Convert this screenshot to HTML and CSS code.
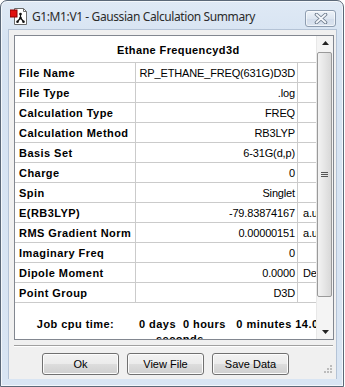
FILE: index.html
```html
<!DOCTYPE html>
<html>
<head>
<meta charset="utf-8">
<link rel="stylesheet" href="styles.css">
</head>
<body>
<div class="window">
  <div class="titlebar">
    <svg class="appicon" width="17" height="17" viewBox="0 0 17 17">
      <path d="M4.5 0.5 H13.5 L16.5 3.5 V16.5 H4.5 Z" fill="#fff" stroke="#6b6b6b"/>
      <path d="M13.5 0.5 V3.5 H16.5" fill="none" stroke="#6b6b6b"/>
      <rect x="0" y="2" width="7" height="7" fill="#e01010" stroke="#8a0000" stroke-width="1"/>
      <path d="M10.5 6 V10 M10.5 10 L7.5 13.5 M10.5 10 L13.5 13.5" stroke="#111" stroke-width="1.2" fill="none"/>
      <circle cx="10.5" cy="6" r="1.3" fill="#111"/>
      <circle cx="10.5" cy="10" r="1.3" fill="#111"/>
      <circle cx="7.5" cy="13.8" r="1.3" fill="#111"/>
      <circle cx="13.5" cy="13.8" r="1.3" fill="#111"/>
    </svg>
    <span class="title">G1:M1:V1 - Gaussian Calculation Summary</span>
    <div class="closebtn">
      <svg width="14" height="11" viewBox="0 0 14 11">
        <path d="M2.5 1.5 L11.5 9.5 M11.5 1.5 L2.5 9.5" stroke="#6d7b8c" stroke-width="3.6" stroke-linecap="round"/>
        <path d="M2.5 1.5 L11.5 9.5 M11.5 1.5 L2.5 9.5" stroke="#f4f7fb" stroke-width="1.8" stroke-linecap="round"/>
      </svg>
    </div>
  </div>
  <div class="client">
    <div class="panel">
      <div class="content">
        <div class="header">Ethane Frequencyd3d</div>
        <div class="row"><div class="lab">File Name</div><div class="val">RP_ETHANE_FREQ(631G)D3D</div><div class="unit"></div></div>
        <div class="row"><div class="lab">File Type</div><div class="val">.log</div><div class="unit"></div></div>
        <div class="row"><div class="lab">Calculation Type</div><div class="val">FREQ</div><div class="unit"></div></div>
        <div class="row"><div class="lab">Calculation Method</div><div class="val">RB3LYP</div><div class="unit"></div></div>
        <div class="row"><div class="lab">Basis Set</div><div class="val">6-31G(d,p)</div><div class="unit"></div></div>
        <div class="row"><div class="lab">Charge</div><div class="val">0</div><div class="unit"></div></div>
        <div class="row"><div class="lab">Spin</div><div class="val">Singlet</div><div class="unit"></div></div>
        <div class="row"><div class="lab">E(RB3LYP)</div><div class="val">-79.83874167</div><div class="unit">a.u.</div></div>
        <div class="row"><div class="lab">RMS Gradient Norm</div><div class="val">0.00000151</div><div class="unit">a.u.</div></div>
        <div class="row"><div class="lab">Imaginary Freq</div><div class="val">0</div><div class="unit"></div></div>
        <div class="row"><div class="lab">Dipole Moment</div><div class="val">0.0000</div><div class="unit">Debye</div></div>
        <div class="row"><div class="lab">Point Group</div><div class="val">D3D</div><div class="unit"></div></div>
        <div class="cpu">
          <div class="cpulab">Job cpu time:</div>
          <div class="cpuval">
            <div class="line1">0 days  0 hours   0 minutes 14.0</div>
            <div class="line2">seconds</div>
          </div>
        </div>
      </div>
      <div class="scrollbar">
        <div class="sbtn"><svg width="7" height="4" viewBox="0 0 7 4"><path d="M0 4 L3.5 0 L7 4 Z" fill="#222"/></svg></div>
        <div class="track">
          <div class="thumb">
            <svg width="7" height="5" viewBox="0 0 7 5"><path d="M0 0.5H7M0 2.5H7M0 4.5H7" stroke="#555" stroke-width="1"/></svg>
          </div>
        </div>
        <div class="sbtn"><svg width="7" height="4" viewBox="0 0 7 4"><path d="M0 0 L3.5 4 L7 0 Z" fill="#222"/></svg></div>
      </div>
    </div>
    <div class="sep"></div>
    <div class="buttons">
      <div class="btn">Ok</div>
      <div class="btn">View File</div>
      <div class="btn">Save Data</div>
    </div>
    <svg class="grip" width="8" height="8" viewBox="0 0 8 8">
      <g fill="#bcbcbc">
        <rect x="6" y="0" width="2" height="2"/>
        <rect x="3" y="3" width="2" height="2"/><rect x="6" y="3" width="2" height="2"/>
        <rect x="0" y="6" width="2" height="2"/><rect x="3" y="6" width="2" height="2"/><rect x="6" y="6" width="2" height="2"/>
      </g>
    </svg>
  </div>
</div>
</body>
</html>
```

FILE: styles.css
```css
html, body {
  margin: 0;
  padding: 0;
  background: #ffffff;
}
.window {
  width: 342px;
  height: 385px;
  border: 1px solid #5b6878;
  border-radius: 7px 7px 0 0;
  background: linear-gradient(#dfe9f5, #d6e3f2 40px, #d9e5f3);
  display: flex;
  flex-direction: column;
  box-shadow: inset 0 0 0 1px #f3f7fb;
}
.titlebar {
  height: 28px;
  display: flex;
  align-items: center;
  position: relative;
}
.appicon {
  margin-left: 9px;
  margin-top: 3px;
}
.title {
  margin-left: 5px;
  margin-top: 2px;
  font-family: "Noto Sans", sans-serif;
  font-size: 12px;
  color: #2b2b2b;
  letter-spacing: -0.4px;
}
.closebtn {
  position: absolute;
  left: 304px;
  top: 9px;
  width: 29px;
  height: 15px;
  border: 1px solid #8e9db0;
  border-radius: 3px;
  background: linear-gradient(#eef3f9, #dde6f1 50%, #d2dceb 51%, #dbe4ef);
  display: flex;
  align-items: center;
  justify-content: center;
  box-shadow: inset 0 0 0 1px rgba(255,255,255,0.6);
}
.client {
  margin: 0 6px 0 7px;
  height: 349px;
  background: #f0f0f0;
  border: 1px solid #b4c3d6;
  border-bottom: none;
  position: relative;
  display: flex;
  flex-direction: column;
}
.panel {
  margin: 5px 0 0 5px;
  width: 318px;
  height: 303px;
  border: 1px solid #828790;
  background: #ffffff;
  display: flex;
  overflow: hidden;
}
.content {
  width: 301px;
  display: flex;
  flex-direction: column;
  font-family: "Liberation Sans", Arial, sans-serif;
  font-size: 11px;
  color: #000;
  letter-spacing: -0.15px;
}
.header {
  border-bottom: 1px solid #cbcbcb;
  font-weight: bold;
  letter-spacing: 0.4px;
  display: flex;
  align-items: center;
  padding-left: 102px;
  padding-top: 1px;
  box-sizing: border-box;
  height: 27px;
}
.row {
  height: 20px;
  border-bottom: 1px solid #cbcbcb;
  box-sizing: border-box;
  display: flex;
}
.lab {
  width: 121px;
  border-right: 1px solid #cbcbcb;
  font-weight: bold;
  letter-spacing: 0.45px;
  padding-left: 4px;
  display: flex;
  align-items: center;
  box-sizing: border-box;
  white-space: nowrap;
}
.val {
  width: 162px;
  border-right: 1px solid #cbcbcb;
  display: flex;
  align-items: center;
  justify-content: flex-end;
  padding-right: 2px;
  box-sizing: border-box;
  white-space: nowrap;
  overflow: hidden;
}
.unit {
  width: 18px;
  padding-left: 5px;
  box-sizing: border-box;
  display: flex;
  align-items: center;
  white-space: nowrap;
  overflow: hidden;
}
.cpu {
  flex: 1;
  display: flex;
  font-weight: bold;
  letter-spacing: 0.45px;
  overflow: hidden;
}
.cpulab {
  width: 121px;
  text-align: center;
  padding-top: 15px;
  box-sizing: border-box;
}
.cpuval {
  width: 180px;
  padding-top: 15px;
  padding-left: 3px;
  box-sizing: border-box;
  overflow: hidden;
}
.line1, .line2 {
  white-space: pre;
}
.line2 {
  padding-left: 17px;
  margin-top: 3px;
}
.scrollbar {
  width: 17px;
  display: flex;
  flex-direction: column;
  background: #f4f4f4;
  border-left: 1px solid #e8e8e8;
  box-sizing: border-box;
}
.sbtn {
  height: 17px;
  display: flex;
  align-items: center;
  justify-content: center;
}
.track {
  flex: 1;
  display: flex;
  flex-direction: column;
  padding: 2px 0 28px 0;
}
.thumb {
  height: 245px;
  margin: 0 1px 0 0;
  border: 1px solid #9a9a9a;
  border-radius: 2px;
  background: linear-gradient(90deg, #f3f3f3, #e6e6e6 50%, #d8d8d8);
  display: flex;
  align-items: center;
  justify-content: center;
  box-sizing: border-box;
}
.sep {
  margin: 5px 0 0 5px;
  width: 319px;
  height: 2px;
  border-top: 1px solid #a0a0a0;
  border-bottom: 1px solid #ffffff;
  box-sizing: border-box;
}
.buttons {
  display: flex;
  gap: 8px;
  margin: 6px 0 0 33px;
}
.btn {
  width: 77px;
  height: 22px;
  box-sizing: border-box;
  border: 1px solid #707070;
  border-radius: 3px;
  background: linear-gradient(#f2f2f2, #ebebeb 50%, #dddddd 51%, #cfcfcf);
  box-shadow: inset 0 0 0 1px #fcfcfc;
  font-family: "Liberation Sans", Arial, sans-serif;
  font-size: 11px;
  color: #000;
  display: flex;
  align-items: center;
  justify-content: center;
}
.grip {
  position: absolute;
  right: 4px;
  bottom: 6px;
}
```
